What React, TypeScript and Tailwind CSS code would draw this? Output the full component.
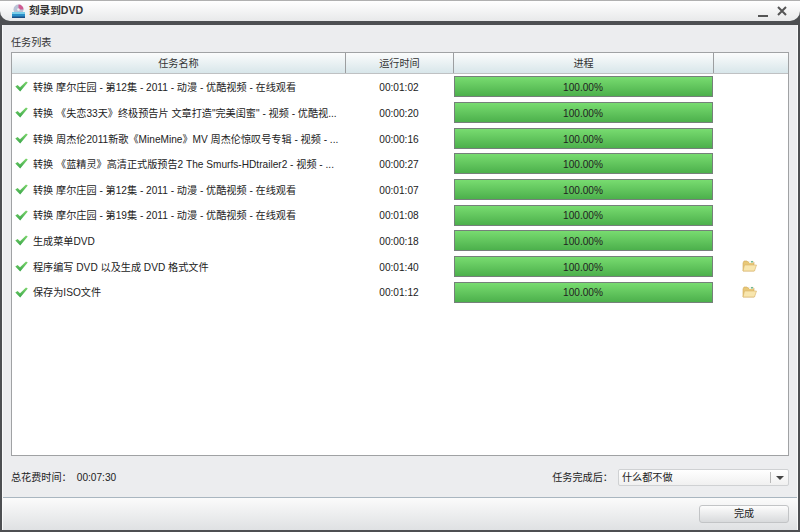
import React from "react";

const rows = [
  ["转换 摩尔庄园 - 第12集 - 2011 - 动漫 - 优酷视频 - 在线观看", "00:01:02", false],
  ["转换 《失恋33天》终极预告片 文章打造\"完美闺蜜\" - 视频 - 优酷视...", "00:00:20", false],
  ["转换 周杰伦2011新歌《MineMine》MV 周杰伦惊叹号专辑 - 视频 - ...", "00:00:16", false],
  ["转换 《蓝精灵》高清正式版预告2 The Smurfs-HDtrailer2 - 视频 - ...", "00:00:27", false],
  ["转换 摩尔庄园 - 第12集 - 2011 - 动漫 - 优酷视频 - 在线观看", "00:01:07", false],
  ["转换 摩尔庄园 - 第19集 - 2011 - 动漫 - 优酷视频 - 在线观看", "00:01:08", false],
  ["生成菜单DVD", "00:00:18", false],
  ["程序编写 DVD 以及生成 DVD 格式文件", "00:01:40", true],
  ["保存为ISO文件", "00:01:12", true],
] as const;

function Check() {
  return (
    <svg width="13" height="11" viewBox="0 0 13 11" className="shrink-0">
      <defs>
        <linearGradient id="chk" x1="0" y1="0" x2="0" y2="1">
          <stop offset="0" stopColor="#7ed66e" />
          <stop offset="1" stopColor="#38a548" />
        </linearGradient>
      </defs>
      <path d="M0.3 5.6 L2.6 4 L5 6.2 L11 0.4 L12.8 1.4 L5.2 10.6 Z" fill="url(#chk)" />
    </svg>
  );
}

function Folder() {
  return (
    <svg width="15" height="12" viewBox="0 0 15 12">
      <path d="M1 3 L1 11 L12 11 L12 2 L6 2 L5 1 L2 1 Z" fill="#e8c878" stroke="#d0aa58" strokeWidth="0.6" />
      <path d="M7 1 L11 0.5 L11.5 3 L7 3 Z" fill="#f4f4ea" />
      <path d="M9 1 L11 1 L11 2.5 L9 2.5 Z" fill="#70b890" />
      <path d="M1 11 L2.5 5 L14.5 5 L12.5 11 Z" fill="#f8e6ae" stroke="#d8b468" strokeWidth="0.6" />
    </svg>
  );
}

function Head({ className, children }: { className: string; children?: React.ReactNode }) {
  return (
    <div className={`flex h-full items-center justify-center border-r border-[#9c9ea0] bg-gradient-to-b from-[#fbfcfc] to-[#d8e6ea] pt-[2px] ${className}`}>
      {children}
    </div>
  );
}

export default function App() {
  return (
    <div className="flex h-[532px] w-[800px] flex-col overflow-hidden bg-[#4d4f52] text-[10.15px] text-[#222] [font-family:'Liberation_Sans','Noto_Sans_CJK_SC',sans-serif]">
      <div className="flex h-[21px] shrink-0 items-center rounded-b-[10px] border-t border-[#b0b0b0] bg-gradient-to-b from-[#ffffff] to-[#e8e9ea] pl-[11px] pr-[13px]">
        <svg width="15" height="15" viewBox="0 0 15 15" className="shrink-0">
          <circle cx="7.5" cy="5.5" r="5" fill="#b9c2d6" />
          <circle cx="7.5" cy="5.5" r="1.3" fill="#f4f4f4" />
          <path d="M7.5 0.5 A5 5 0 0 1 12.5 5.5 L8.8 5.5 A1.3 1.3 0 0 0 7.5 4.2 Z" fill="#d05a90" />
          <path d="M1 8 L14 8 L14 14 L1 14 Z" fill="#2a8fc8" />
          <path d="M1 8 L14 8 L14 10 L1 10 Z" fill="#7cd0ea" />
          <path d="M1 12.5 L14 12.5 L14 14 L1 14 Z" fill="#1b4f86" />
        </svg>
        <span className="ml-[3px] text-[10.6px] font-bold text-[#333]">刻录到DVD</span>
        <div className="ml-auto flex items-center gap-[9px]">
          <div className="mt-[9px] h-[2px] w-[10px] bg-[#555]" />
          <svg width="10" height="10" viewBox="0 0 10 10">
            <path d="M1 1 L9 9 M9 1 L1 9" stroke="#555" strokeWidth="2" />
          </svg>
        </div>
      </div>
      <div className="mx-[2px] mb-[2px] mt-[4px] flex min-h-0 flex-1 flex-col border-l border-r border-white/70 bg-[#ecedef]">
        <div className="flex min-h-0 flex-1 flex-col px-[8px]">
          <div className="mt-[10px] h-[17px] shrink-0 leading-[16px] text-[#333]">任务列表</div>
          <div className="flex h-[404px] shrink-0 flex-col border border-[#a0a2a4] bg-white">
            <div className="flex h-[20px] shrink-0 text-[#333]">
              <Head className="w-[334px]">任务名称</Head>
              <Head className="w-[108px]">运行时间</Head>
              <Head className="w-[260px]">进程</Head>
              <div className="flex-1 bg-gradient-to-b from-[#fbfcfc] to-[#d8e6ea]" />
            </div>
            <div className="h-[1px] shrink-0 bg-[#bfc1c3]" />
            {rows.map(([name, time, folder], i) => (
              <div key={i} className="flex h-[25.67px] shrink-0 items-center">
                <div className="flex w-[334px] items-center gap-[5px] whitespace-nowrap pl-[3px]">
                  <Check />
                  <span className="pt-[2px]">{name}</span>
                </div>
                <div className="w-[108px] pr-[2px] pt-[2px] text-center">{time}</div>
                <div className="w-[260px]">
                  <div className="flex h-[21px] w-[259px] items-center justify-center border border-[#75807a] bg-gradient-to-b from-[#78dc70] to-[#4cb04c] pr-[1px] pt-[2px]">
                    100.00%
                  </div>
                </div>
                <div className="flex flex-1 justify-center pr-[4px]">{folder && <Folder />}</div>
              </div>
            ))}
          </div>
          <div className="flex h-[41px] shrink-0 items-center pt-[2px]">
            <span>总花费时间：</span>
            <span className="ml-[5px]">00:07:30</span>
            <span className="ml-auto mr-[5px]">任务完成后：</span>
            <div className="flex h-[17px] w-[171px] items-center rounded-[2px] border border-[#cfd1d3] bg-gradient-to-b from-[#ffffff] to-[#f0f0f0] pl-[3px]">
              <span>什么都不做</span>
              <div className="ml-auto flex h-[11px] w-[18px] items-center justify-center border-l border-[#b8b8b8]">
                <div className="h-0 w-0 border-x-[4px] border-t-[4px] border-x-transparent border-t-[#444]" />
              </div>
            </div>
          </div>
        </div>
        <div className="flex h-[33px] shrink-0 items-center justify-end border-t border-[#a9b6c0] bg-gradient-to-b from-[#fbfbfb] to-[#dfe1e3] pr-[8px]">
          <button className="mb-[1px] h-[18px] w-[90px] rounded-[3px] border border-[#c2c4c6] bg-gradient-to-b from-[#fdfdfd] to-[#d8dadc] text-[10.15px] text-[#222]">完成</button>
        </div>
      </div>
    </div>
  );
}
